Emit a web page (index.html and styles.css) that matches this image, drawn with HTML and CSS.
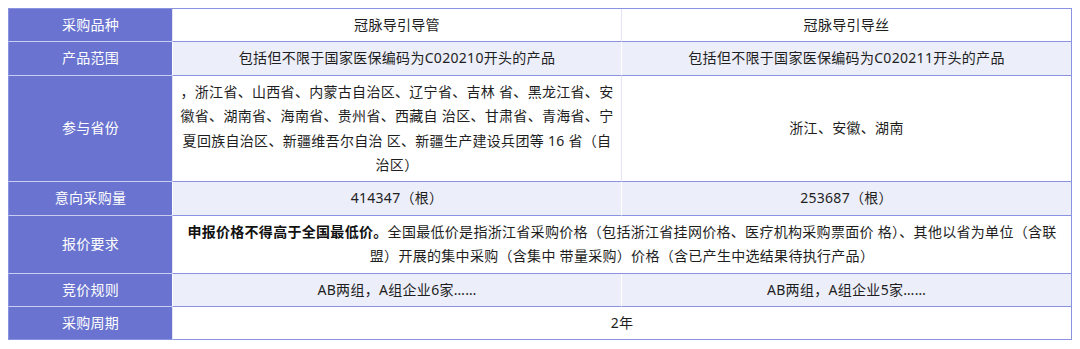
FILE: index.html
```html
<!DOCTYPE html>
<html lang="zh-CN">
<head>
<meta charset="utf-8">
<title>采购品种</title>
<link rel="stylesheet" href="styles.css">
</head>
<body>
<table class="info-table">
  <colgroup>
    <col class="col-label">
    <col class="col-a">
    <col class="col-b">
  </colgroup>
  <tbody>
    <tr class="row-odd">
      <th>采购品种</th>
      <td>冠脉导引导管</td>
      <td class="last">冠脉导引导丝</td>
    </tr>
    <tr class="row-even">
      <th>产品范围</th>
      <td>包括但不限于国家医保编码为C020210开头的产品</td>
      <td class="last">包括但不限于国家医保编码为C020211开头的产品</td>
    </tr>
    <tr class="row-odd">
      <th>参与省份</th>
      <td>，浙江省、山西省、内蒙古自治区、辽宁省、吉林 省、黑龙江省、安徽省、湖南省、海南省、贵州省、西藏自 治区、甘肃省、青海省、宁夏回族自治区、新疆维吾尔自治 区、新疆生产建设兵团等 16 省（自治区）</td>
      <td class="last">浙江、安徽、湖南</td>
    </tr>
    <tr class="row-even">
      <th>意向采购量</th>
      <td>414347（根）</td>
      <td class="last">253687（根）</td>
    </tr>
    <tr class="row-odd">
      <th>报价要求</th>
      <td colspan="2" class="last"><strong>申报价格不得高于全国最低价。</strong>全国最低价是指浙江省采购价格（包括浙江省挂网价格、医疗机构采购票面价 格）、其他以省为单位（含联盟）开展的集中采购（含集中 带量采购）价格（含已产生中选结果待执行产品）</td>
    </tr>
    <tr class="row-even">
      <th>竞价规则</th>
      <td>AB两组，A组企业6家……</td>
      <td class="last">AB两组，A组企业5家……</td>
    </tr>
    <tr class="row-odd row-last">
      <th>采购周期</th>
      <td colspan="2" class="last">2年</td>
    </tr>
  </tbody>
</table>
</body>
</html>
```

FILE: styles.css
```css
html, body {
  margin: 0;
  padding: 0;
  background: #ffffff;
}

body {
  padding: 8px;
  font-family: "Noto Sans", "Noto Sans CJK SC", sans-serif;
  font-size: 14px;
  color: #1e1e1e;
}

.info-table {
  width: 1064px;
  border-collapse: separate;
  border-spacing: 0;
  table-layout: fixed;
  border-top: 1px solid #8b93e0;
}

.col-label { width: 164px; }
.col-a { width: 449px; }
.col-b { width: 451px; }

.info-table th,
.info-table td {
  padding: 4px 6px;
  line-height: 24.4px;
  letter-spacing: 0.3px;
  text-align: center;
  vertical-align: middle;
  font-weight: normal;
}

.info-table th {
  background: #6a74d0;
  color: #ffffff;
  border-bottom: 1px solid #c9cdf2;
  border-left: 1px solid #8b93e0;
}

.info-table td {
  border-bottom: 1px solid #8b93e0;
  border-left: 1px solid #e2e4f6;
}

.info-table td.last {
  border-right: 1px solid #8b93e0;
}

.row-even td {
  background: #eceef9;
  border-left-color: #ffffff;
}

.row-last th {
  border-bottom-color: #8b93e0;
}

.info-table strong {
  font-weight: bold;
  color: #111111;
}
```
